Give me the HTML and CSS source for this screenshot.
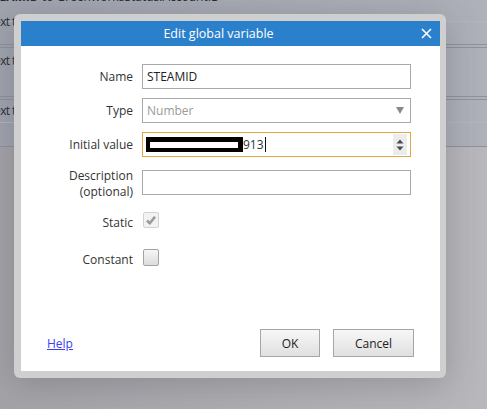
FILE: index.html
```html
<!DOCTYPE html>
<html>
<head>
<meta charset="utf-8">
<link rel="stylesheet" href="styles.css">
</head>
<body>
<div class="page">
  <div class="events">
    <div class="ev ev1">
      <div class="evtext cond"><b>STEAMID</b> to GreenworksStatus.AccountID</div>
      <div class="evtext act">Text to</div>
    </div>
    <div class="ev ev2"></div>
    <div class="ev ev3"><div class="evtext act">Text to</div></div>
    <div class="ev ev4">
      <div class="ev4a"><div class="evtext act">Text to</div></div>
      <div class="ev4b"></div>
    </div>
  </div>

  <div class="modal">
    <div class="dialog">
      <div class="titlebar">
        <span class="title">Edit global variable</span>
        <svg class="close" width="11" height="11" viewBox="0 0 11 11"><path d="M1 1 L10 10 M10 1 L1 10" stroke="#fff" stroke-width="1.6" fill="none"/></svg>
      </div>
      <div class="body">
        <div class="row r-name">
          <div class="label">Name</div>
          <div class="field">STEAMID</div>
        </div>
        <div class="row r-type">
          <div class="label">Type</div>
          <div class="field select"><span class="ph">Number</span>
            <svg class="arrow" width="8" height="7" viewBox="0 0 8 7"><path d="M0 0 H8 L4 7 Z" fill="#8a8a8a"/></svg>
          </div>
        </div>
        <div class="row r-init">
          <div class="label">Initial value</div>
          <div class="field focus"><span class="redact"></span><span class="num">913</span><span class="caret"></span>
            <span class="spin">
              <svg width="8" height="14" viewBox="0 0 8 14"><path d="M0.5 5.5 L4 1.5 L7.5 5.5 Z M0.5 8.5 L4 12.5 L7.5 8.5 Z" fill="#4a4a4a"/></svg>
            </span>
          </div>
        </div>
        <div class="row r-desc">
          <div class="label two">Description<br>(optional)</div>
          <div class="field"></div>
        </div>
        <div class="row chk r-static">
          <div class="label">Static</div>
          <div class="cb checked">
            <svg width="14" height="14" viewBox="0 0 14 14"><path d="M3 7.5 L5.8 10.3 L11 3.8" stroke="#9a9a9a" stroke-width="2.6" fill="none" stroke-linejoin="round"/></svg>
          </div>
        </div>
        <div class="row chk r-const">
          <div class="label">Constant</div>
          <div class="cb"></div>
        </div>
        <div class="footer">
          <a class="help" href="#">Help</a>
          <div class="buttons">
            <button class="btn ok">OK</button>
            <button class="btn cancel">Cancel</button>
          </div>
        </div>
      </div>
    </div>
  </div>
</div>
</body>
</html>
```
FILE: styles.css
```css
* { box-sizing: border-box; }
html, body { margin: 0; padding: 0; }
body {
  font-family: "Open Sans", "Noto Sans", sans-serif;
  font-size: 12px;
  background: #a7a7ac;
  overflow: hidden;
}
.page {
  position: relative;
  width: 487px;
  height: 409px;
  overflow: hidden;
  background: linear-gradient(to right, #a3a3a8, #b7b7bc);
}

/* background event sheet */
.events {
  background: linear-gradient(to right, #a0a4ae, #aeb1b9);
  color: #2a2b30;
  overflow: hidden;
}
.ev1 { height: 33px; border-bottom: 1px solid #b3b6bd; }
.ev2 { height: 23px; border-bottom: 1px solid #8e929b; }
.ev3 {
  margin-top: 2px;
  height: 50px;
  border-top: 1px solid #8e929b;
  border-bottom: 1px solid #8e929b;
  padding-top: 5px;
}
.ev4 {
  margin-top: 2px;
  height: 48px;
  border-top: 1px solid #8e929b;
  border-bottom: 1px solid #8e929b;
}
.ev4a { height: 23px; border-bottom: 1px solid #b3b6bd; padding-top: 3px; }
.evtext { line-height: 16px; white-space: nowrap; font-size: 12px; }
.cond { margin-top: -11px; text-indent: -14px; }
.act { text-indent: -12px; letter-spacing: -0.6px; }
.ev1 .act { margin-top: 9px; }

/* modal */
.modal {
  position: absolute;
  left: 14px;
  top: 14px;
  width: 432px;
  height: 364px;
  background: #cfcfcf;
  border-radius: 6px;
  padding: 7px 6px 7px 7px;
  box-shadow: 0 6px 34px rgba(60, 60, 70, 0.28);
}
.dialog {
  height: 100%;
  background: #fff;
  display: flex;
  flex-direction: column;
}
.titlebar {
  position: relative;
  height: 25px;
  flex: 0 0 25px;
  background: #2b80cc;
  color: #fff;
  display: flex;
  align-items: center;
  justify-content: center;
  font-size: 12.5px;
  padding-right: 24px;
}
.close {
  position: absolute;
  right: 8px;
  top: 7px;
}
.body {
  flex: 1;
  display: flex;
  flex-direction: column;
  padding-top: 18px;
}
.row { display: flex; align-items: center; }
.label {
  width: 121px;
  flex: 0 0 121px;
  padding-right: 9px;
  text-align: right;
  color: #333;
  line-height: 16px;
  white-space: nowrap;
}
.field {
  width: 269px;
  height: 25px;
  border: 1px solid #a9a9a9;
  padding-left: 4px;
  display: flex;
  align-items: center;
  color: #222;
}
.r-type, .r-init { margin-top: 9px; }
.select .ph { color: #9a9a9a; }
.select .arrow { margin-left: auto; margin-right: 6px; }
.focus { border-color: #e2a644; padding-left: 3px; }
.redact {
  display: inline-block;
  width: 97px;
  height: 15px;
  background: #fff;
  border-style: solid;
  border-color: #000;
  border-width: 5px 5px 4px 4px;
}
.num { color: #333; }
.caret { display: inline-block; width: 1px; height: 15px; background: #111; margin-left: 1px; }
.spin {
  margin-left: auto;
  margin-right: 3px;
  width: 14px;
  height: 21px;
  background: #ececec;
  display: flex;
  align-items: center;
  justify-content: center;
}
.r-desc { margin-top: 13px; align-items: flex-start; }
.label.two { margin-top: -2px; }
.chk { align-items: flex-start; }
.chk .label { margin-top: 3px; }
.r-static { margin-top: 12px; }
.r-const { margin-top: 18px; }
.cb {
  width: 16px;
  height: 17px;
  border: 1px solid #a3a3a3;
  border-radius: 2px;
  background: linear-gradient(#f6f6f6, #dcdcdc);
  margin-left: 1px;
}
.cb.checked {
  height: 16px;
  border-color: #d2d2d2;
  background: #f2f2f2;
  display: flex;
  align-items: center;
  justify-content: center;
}
.footer {
  margin-top: auto;
  padding: 0 26px 14px 26px;
  display: flex;
  align-items: center;
  justify-content: space-between;
}
.help { color: #3d3dfa; text-decoration: underline; font-size: 12px; }
.buttons { display: flex; gap: 13px; }
.btn {
  height: 28px;
  border: 1px solid #a6a6a6;
  background: linear-gradient(#f7f7f7, #e0e0e0);
  font-family: "Open Sans", "Noto Sans", sans-serif;
  font-size: 12px;
  color: #222;
  padding: 0;
}
.ok { width: 60px; }
.cancel { width: 81px; }
```
